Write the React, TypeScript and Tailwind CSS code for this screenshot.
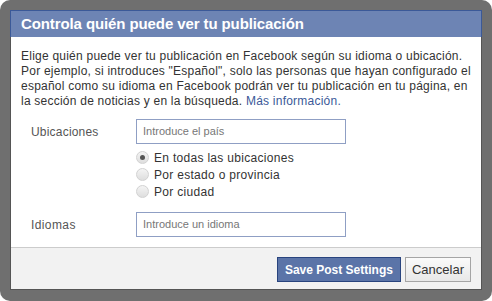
import React from "react";

function Radio({ checked, label }: { checked?: boolean; label: string }) {
  return (
    <label className="flex items-center gap-[5px] h-[17px]">
      <span className="w-[13px] h-[13px] rounded-full border border-[#d2d2d2] bg-gradient-to-b from-[#f4f4f4] to-[#dedede] flex items-center justify-center">
        {checked && <span className="w-[5px] h-[5px] rounded-full bg-[#555]" />}
      </span>
      <span className="text-[12px] tracking-[0.3px] text-[#333]">{label}</span>
    </label>
  );
}

export default function App() {
  return (
    <div
      className="w-[492px] h-[301px] bg-white"
      style={{ fontFamily: '"Liberation Sans", Arial, sans-serif' }}
    >
      <div className="w-[492px] h-[301px] rounded-[10px] bg-[#6f6f6f] p-[10px] pb-[11px]">
        <div className="h-[280px] flex flex-col bg-white border border-[#555]">
          <div className="h-[27px] shrink-0 bg-[#6d84b4] border border-[#3b5998] border-b-0 flex items-center px-[10px] -mx-px -mt-px">
            <span className="text-white font-bold text-[15px] tracking-[-0.1px]">
              Controla quién puede ver tu publicación
            </span>
          </div>
          <div className="flex-1 px-[10px] pt-[12px]">
            <p className="text-[12px] leading-[15px] tracking-[0.23px] text-[#333] whitespace-nowrap">
              Elige quién puede ver tu publicación en Facebook según su idioma o ubicación.
              <br />
              Por ejemplo, si introduces "Español", solo las personas que hayan configurado el
              <br />
              español como su idioma en Facebook podrán ver tu publicación en tu página, en
              <br />
              la sección de noticias y en la búsqueda.{" "}
              <span className="text-[#3b5998]">Más información.</span>
            </p>
            <div className="mt-[10px] flex items-center">
              <span className="w-[115px] pl-[10px] text-[12px] tracking-[0.2px] text-[#555]">
                Ubicaciones
              </span>
              <div className="w-[210px] h-[25px] border border-[#8f9fc4] flex items-center px-[6px]">
                <span className="text-[11px] text-[#777]">Introduce el país</span>
              </div>
            </div>
            <div className="ml-[115px] mt-[5px] flex flex-col">
              <Radio checked label="En todas las ubicaciones" />
              <Radio label="Por estado o provincia" />
              <Radio label="Por ciudad" />
            </div>
            <div className="mt-[12px] flex items-center">
              <span className="w-[115px] pl-[10px] text-[12px] tracking-[0.4px] text-[#555]">
                Idiomas
              </span>
              <div className="w-[210px] h-[25px] border border-[#8f9fc4] flex items-center px-[6px]">
                <span className="text-[11px] text-[#777]">Introduce un idioma</span>
              </div>
            </div>
          </div>
          <div className="h-[42px] shrink-0 bg-[#f2f2f2] border-t border-[#ccc] flex items-center justify-end gap-[4px] px-[10px] pt-[2px]">
            <button className="h-[25px] px-[7px] bg-[#5b74a8] border border-[#29447e] text-white font-bold text-[12px]">
              Save Post Settings
            </button>
            <button className="h-[25px] px-[6px] bg-gradient-to-b from-[#fafafa] to-[#e8e8e8] border border-[#a5a5a5] text-[#333] text-[13px]">
              Cancelar
            </button>
          </div>
        </div>
      </div>
    </div>
  );
}
